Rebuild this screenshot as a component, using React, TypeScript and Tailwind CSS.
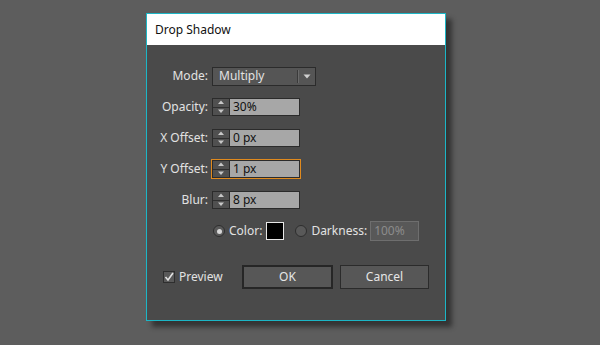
import type { ReactNode } from "react";

const font = { fontFamily: '"Noto Sans", "Liberation Sans", sans-serif' };

function Spinner() {
  return (
    <div className="flex h-[18px] w-[18px] shrink-0 flex-col border border-[#2b2b2b] bg-[#505050]">
      <div className="flex flex-1 items-center justify-center border-b border-[#2f2f2f]">
        <svg width="8" height="6" viewBox="0 0 8 6">
          <path d="M4 0.5 L7 4 L1 4 Z" fill="#c8c8c8" />
        </svg>
      </div>
      <div className="flex flex-1 items-center justify-center">
        <svg width="8" height="6" viewBox="0 0 8 6">
          <path d="M1 1.5 L7 1.5 L4 5 Z" fill="#c8c8c8" />
        </svg>
      </div>
    </div>
  );
}

function Row({ label, children }: { label: string; children: ReactNode }) {
  return (
    <div className="flex h-[18px] items-center">
      <span className="w-[62px] shrink-0 pr-[1px] text-right text-[12px] text-[#e2e2e2]">{label}</span>
      <div className="ml-[3px] flex items-center">{children}</div>
    </div>
  );
}

function NumField({ value, focused }: { value: string; focused?: boolean }) {
  return (
    <div
      className={`flex ${focused ? "-m-[1px] border border-[#e08a1e]" : ""}`}
    >
      <Spinner />
      <div className="flex h-[18px] w-[70px] items-center border border-l-0 border-[#2b2b2b] bg-[#a7a7a7] pl-[3px] text-[12px] text-[#111]">
        {value}
      </div>
    </div>
  );
}

export default function App() {
  return (
    <div className="h-[345px] w-[600px] bg-[#5d5d5d] pl-[146px] pt-[13px]" style={font}>
      <div className="flex h-[308px] w-[300px] flex-col border border-[#1cb6c6] bg-[#4a4a4a] shadow-[6px_6px_5px_rgba(0,0,0,0.45)]">
        <div className="flex h-[31px] items-center bg-white pl-[8px] text-[12px] text-[#111]">Drop Shadow</div>

        <div className="flex flex-col gap-[13px] pt-[22px]">
          <Row label="Mode:">
            <div className="flex h-[19px] w-[104px] items-center border border-[#2b2b2b] bg-[#555555] text-[12px] text-[#e2e2e2]">
              <span className="flex-1 pl-[6px]">Multiply</span>
              <div className="h-[13px] w-px bg-[#3a3a3a]" />
              <div className="h-[13px] w-px bg-[#6a6a6a]" />
              <div className="flex w-[16px] items-center justify-center">
                <svg width="8" height="5" viewBox="0 0 8 5">
                  <path d="M0.5 0.5 L7.5 0.5 L4 4.5 Z" fill="#d0d0d0" />
                </svg>
              </div>
            </div>
          </Row>
          <Row label="Opacity:">
            <NumField value="30%" />
          </Row>
          <Row label="X Offset:">
            <NumField value="0 px" />
          </Row>
          <Row label="Y Offset:">
            <NumField value="1 px" focused />
          </Row>
          <Row label="Blur:">
            <NumField value="8 px" />
          </Row>
        </div>

        <div className="mt-[12px] flex h-[20px] items-center pl-[66px] text-[12px] text-[#e2e2e2]">
          <div className="flex h-[12px] w-[12px] items-center justify-center rounded-full border border-[#2e2e2e] bg-[#595959]">
            <div className="h-[5px] w-[5px] rounded-full bg-[#d8d8d8]" />
          </div>
          <span className="ml-[4px]">Color:</span>
          <div className="ml-[4px] h-[18px] w-[18px] border border-[#e8e8e8] bg-black" />
          <div className="ml-[11px] h-[12px] w-[12px] rounded-full border border-[#2e2e2e] bg-[#595959]" />
          <span className="ml-[4px]">Darkness:</span>
          <div className="ml-[3px] flex h-[20px] w-[49px] items-center border border-[#6e6e6e] bg-[#585858] pl-[3px] text-[#8c8c8c]">
            100%
          </div>
        </div>

        <div className="mt-[24px] flex items-center pl-[16px]">
          <div className="flex h-[12px] w-[12px] items-center justify-center border border-[#2e2e2e] bg-[#595959]">
            <svg width="10" height="10" viewBox="0 0 10 10">
              <path d="M1.5 5 L4 8 L9 1" stroke="#e2e2e2" strokeWidth="1.6" fill="none" />
            </svg>
          </div>
          <span className="ml-[4px] w-[45px] text-[12px] text-[#e2e2e2]">Preview</span>
          <button className="ml-[18px] flex h-[24px] w-[91px] items-center justify-center border-2 border-[#262626] bg-[#575757] text-[12px] text-[#e6e6e6]">
            OK
          </button>
          <button className="ml-[7px] flex h-[24px] w-[89px] items-center justify-center border border-[#2b2b2b] bg-[#575757] text-[12px] text-[#e6e6e6]">
            Cancel
          </button>
        </div>
      </div>
    </div>
  );
}
